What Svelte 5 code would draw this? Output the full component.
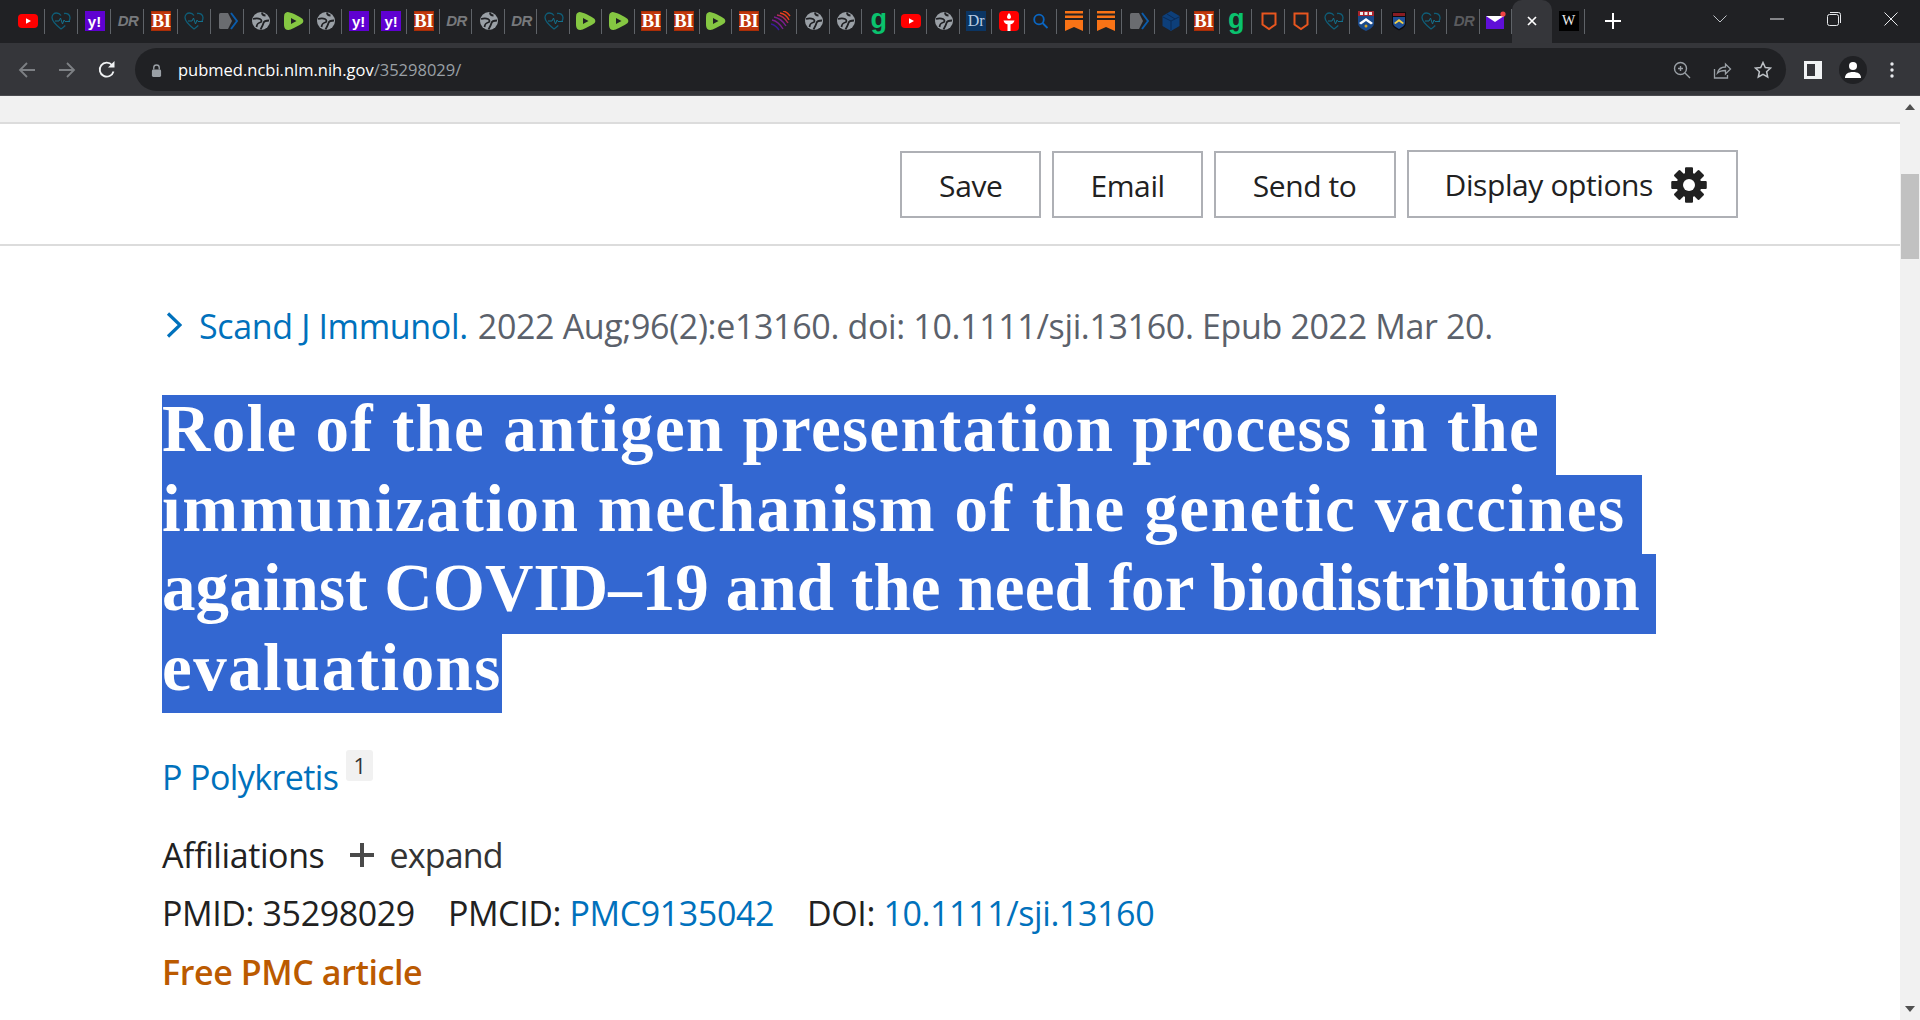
<script>
  const tabs = ['yt','heart','yahoo','dr','bi','heart','pocket','globe','rumble','globe','yahoo','yahoo','bi','dr','globe','dr','heart','rumble','rumble','bi','bi','rumble','bi','spiral','globe','globe','g','yt','globe','drb','torch','search','ribbon','ribbon','pocket','hex','bi','g','shield','shield','heart','crest','crestdark','heart','drdark','mail'];
  const gearTeeth = [0, 45, 90, 135, 180, 225, 270, 315];
</script>

{#snippet favicon(kind)}
  {#if kind === 'yt'}
    <svg viewBox="0 0 20 20" class="fav"><rect x="0" y="3" width="20" height="14" rx="4" fill="#f00"/><path d="M8 7.2v5.6l5-2.8z" fill="#fff"/></svg>
  {:else if kind === 'heart'}
    <svg viewBox="0 0 20 20" class="fav"><path d="M10 18C5 14 1 10.500 1 6.500 1 3.500 3.200 2 5.500 2 7.500 2 9 3 10 4.500M13 2.500c3-.8 6 1 6 4.300 0 1.200-.4 2.300-1 3.400M10 18c1.500-1 3-2.300 4.300-3.500" fill="none" stroke="#0f5e78" stroke-width="1.300"/><path d="M4 10h4l1.500-3 2 6 1.500-4 1 1.500h5" fill="none" stroke="#14708c" stroke-width="1"/></svg>
  {:else if kind === 'yahoo'}
    <div class="fav square yahoo">y!</div>
  {:else if kind === 'dr'}
    <div class="fav drtext">DR</div>
  {:else if kind === 'drdark'}
    <div class="fav drtext darker">DR</div>
  {:else if kind === 'bi'}
    <div class="fav square bi">BI</div>
  {:else if kind === 'pocket'}
    <svg viewBox="0 0 20 20" class="fav"><path d="M1 3.500Q1 2 2.500 2H10l4 8-4 8H2.500Q1 18 1 16.500z" fill="#6a6c70"/><path d="M13 2l6 8-6 8" fill="none" stroke="#0b5cab" stroke-width="2"/></svg>
  {:else if kind === 'globe'}
    <svg viewBox="0 0 20 20" class="fav"><circle cx="10" cy="10" r="9" fill="#9aa0a6"/><path d="M2 8c3-1 5-1 7 0s2 3 0 3.500-3 1-3.500 4.500" fill="none" stroke="#202124" stroke-width="1.800"/><path d="M18 9.500c-3 0-5 .5-5.500 2.500s-1 3-3 6.500M11 1.500c0 2 1.500 3 3.500 3" fill="none" stroke="#202124" stroke-width="1.800"/></svg>
  {:else if kind === 'rumble'}
    <svg viewBox="0 0 20 20" class="fav"><path d="M3.500 1c-2 .3-3.300 1.500-3.400 4-.2 3.300-.2 6.700 0 10 .1 2.500 2 4.200 4.500 4 2-.2 8-3.200 13-6.300 2.300-1.500 2.300-4 0-5.500C13 4 7 1.500 3.500 1z" fill="#85c742"/><path d="M7 7v6l5.500-3z" fill="#202124"/></svg>
  {:else if kind === 'spiral'}
    <svg viewBox="0 0 20 20" class="fav" fill="none" stroke-width="1.400"><path d="M12 0c3 .5 5 2 7 5M9 2c4 .5 7 3 9 7" stroke="#e8401a"/><path d="M6 4c5 .5 8 3 11 8" stroke="#b02a5a"/><path d="M3 6c5 1 9 4 12 9M1 9c5 1 8 4 11 9" stroke="#7a1d8f"/><path d="M0 13c4 1 6 3 8 6" stroke="#3a1a9a"/></svg>
  {:else if kind === 'g'}
    <div class="fav gmark">g</div>
  {:else if kind === 'drb'}
    <div class="fav square drb">Dr</div>
  {:else if kind === 'torch'}
    <svg viewBox="0 0 20 20" class="fav"><rect width="20" height="20" rx="4" fill="#f00"/><path d="M10 2c1.500 2 2 3 2 4s-1 2-2 2-2-1-2-2 .5-2 2-4z" fill="#fff"/><path d="M4.500 9.500h11c-.5 2.300-2.300 3.500-4 3.800V20h-3v-6.700c-1.700-.3-3.500-1.500-4-3.800z" fill="#fff"/></svg>
  {:else if kind === 'search'}
    <svg viewBox="0 0 20 20" class="fav" fill="none" stroke="#0a66c2" stroke-width="1.800"><circle cx="8" cy="8.500" r="4.800"/><path d="M11.500 12l5 5"/></svg>
  {:else if kind === 'ribbon'}
    <svg viewBox="0 0 20 20" class="fav" fill="#f97316"><rect x="1" y="0" width="18" height="2.500"/><rect x="1" y="4.500" width="18" height="2.500"/><path d="M1 9h18v11l-9-4-9 4z"/></svg>
  {:else if kind === 'hex'}
    <svg viewBox="0 0 20 20" class="fav"><path d="M10 0l8.500 5v10L10 20l-8.500-5V5z" fill="#0d3f7a"/><path d="M2 6l8 4 8-4M10 10v9M6 3l8 5" fill="none" stroke="#0a2a55" stroke-width="1"/></svg>
  {:else if kind === 'shield'}
    <svg viewBox="0 0 20 20" class="fav"><path d="M3.500 2.500h13v11L10 18l-6.500-4.500z" fill="none" stroke="#e8561f" stroke-width="2"/></svg>
  {:else if kind === 'crest'}
    <svg viewBox="0 0 20 20" class="fav"><path d="M2 0h16v12c0 4-4 6-8 8-4-2-8-4-8-8z" fill="#1b4a8a"/><rect x="2" y="0" width="16" height="5" fill="#a8242c"/><path d="M4 1h3v3H4zM8.500 1h3v3h-3zM13 1h3v3h-3z" fill="#eee"/><path d="M3 12l7-5 7 5-2 1.500-5-3.500-5 3.500z" fill="#fff"/><circle cx="10" cy="15" r="1.500" fill="#d9a520"/></svg>
  {:else if kind === 'crestdark'}
    <svg viewBox="0 0 20 20" class="fav"><path d="M3 1h14v11c0 3.500-3 5.500-7 7.500C6 17.500 3 15.500 3 12z" fill="#0c0c10"/><rect x="4" y="2" width="12" height="3" fill="#8a1c22"/><path d="M4 6h12v6c0 2.500-2.500 4-6 6-3.500-2-6-3.500-6-6z" fill="#1f4f96"/><path d="M5 12l5-4 5 4-1.500 1L10 10.500 6.500 13z" fill="#f2d24a"/></svg>
  {:else if kind === 'mail'}
    <svg viewBox="0 0 20 20" class="fav"><rect x="0" y="5" width="18" height="13" fill="#5f0fd8"/><path d="M0 5h18l-9 6z" fill="#fff"/><circle cx="17" cy="3" r="2.600" fill="#ef4444"/></svg>
  {/if}
{/snippet}

<div class="window">
  <header class="tabstrip">
    {#each tabs as kind}
      <div class="tab">{@render favicon(kind)}</div>
    {/each}
    <div class="tab active">
      <svg viewBox="0 0 12 12" width="12" height="12" fill="none" stroke="#fff" stroke-width="1.700"><path d="M2 2l8 8M10 2l-8 8"/></svg>
    </div>
    <div class="tab"><div class="fav square wiki">W</div></div>
    <svg class="plus" viewBox="0 0 16 16" width="16" height="16" stroke="#fff" stroke-width="2"><path d="M8 0v16M0 8h16"/></svg>
    <div class="wincontrols">
      <svg class="chev" viewBox="0 0 14 8" width="14" height="8" fill="none" stroke="#bdc1c6"><path d="M.5.500L7 7 13.500.500"/></svg>
      <svg class="min" viewBox="0 0 14 2" width="14" height="2" stroke="#e8eaed"><path d="M0 1h14"/></svg>
      <svg class="restore" viewBox="0 0 14 14" width="14" height="14" fill="none" stroke="#e8eaed"><rect x=".5" y="2.500" width="11" height="11" rx="2"/><path d="M3 .5h8.500a2 2 0 0 1 2 2V11"/></svg>
      <svg class="close" viewBox="0 0 14 14" width="14" height="14" fill="none" stroke="#e8eaed"><path d="M.5.500l13 13M13.500.500l-13 13"/></svg>
    </div>
  </header>

  <div class="toolbar">
    <svg class="nav" viewBox="0 0 18 18" width="18" height="18" fill="none" stroke="#7d8084" stroke-width="1.800"><path d="M17 9H2M9 2L2 9l7 7"/></svg>
    <svg class="nav" viewBox="0 0 18 18" width="18" height="18" fill="none" stroke="#7d8084" stroke-width="1.800"><path d="M1 9h15M9 2l7 7-7 7"/></svg>
    <svg class="nav" viewBox="0 0 18 18" width="18" height="18" fill="none" stroke="#f1f3f4" stroke-width="1.800"><path d="M15.500 10.500A7 7 0 1 1 14 4"/><path d="M10 6.500h6.500V0z" fill="#f1f3f4" stroke="none"/></svg>
    <div class="omnibox">
      <svg class="lock" viewBox="0 0 12 14" width="11" height="13"><path d="M3 6V4a3 3 0 0 1 6 0v2" fill="none" stroke="#9aa0a6" stroke-width="1.500"/><rect x="1" y="6" width="10" height="8" rx="1.500" fill="#9aa0a6"/></svg>
      <span class="url">pubmed.ncbi.nlm.nih.gov<span class="urlpath">/35298029/</span></span>
      <div class="omni-icons">
        <svg viewBox="0 0 18 18" width="18" height="18" fill="none" stroke="#9aa0a6" stroke-width="1.400"><circle cx="7.500" cy="7.500" r="6"/><path d="M12 12l5 5M5 7.500h5M7.500 5v5"/></svg>
        <svg viewBox="0 0 18 18" width="19" height="18" fill="none" stroke="#9aa0a6" stroke-width="1.300"><path d="M1 8v9h13v-3"/><path d="M4 12c1-4 4-6 8-6V3l5 5-5 5V9.500c-3 0-6 .5-8 2.500z"/></svg>
        <svg viewBox="0 0 18 18" width="18" height="18" fill="none" stroke="#bdc1c6" stroke-width="1.500"><path d="M9 1.500l2.300 5 5.200.6-3.900 3.600 1.100 5.300L9 13.300 4.300 16l1.100-5.300L1.500 7.100l5.200-.6z"/></svg>
      </div>
    </div>
    <div class="tool-icons">
      <svg viewBox="0 0 18 18" width="18" height="18"><rect width="18" height="18" fill="#f1f3f4"/><rect x="3" y="3" width="8" height="12" fill="#35363a"/></svg>
      <div class="avatar">
        <svg viewBox="0 0 18 18" width="18" height="18" fill="#fff"><circle cx="9" cy="5" r="4"/><path d="M1 17c0-4 3-6 8-6s8 2 8 6z"/></svg>
      </div>
      <svg viewBox="0 0 4 16" width="4" height="16" fill="#e8eaed"><circle cx="2" cy="2" r="1.700"/><circle cx="2" cy="8" r="1.700"/><circle cx="2" cy="14" r="1.700"/></svg>
    </div>
  </div>

  <div class="page">
    <main class="main">
      <div class="topband"></div>
      <div class="actions">
        <button class="btn">Save</button>
        <button class="btn">Email</button>
        <button class="btn">Send to</button>
        <button class="btn display">
          Display options
          <svg viewBox="0 0 36 36" width="36" height="36" fill="#212121">
            {#each gearTeeth as angle}
              <rect x="14" y="0.500" width="8" height="35" rx="1" transform="rotate({angle} 18 18)"/>
            {/each}
            <circle cx="18" cy="18" r="12.500"/>
            <circle cx="18" cy="18" r="6" fill="#fff"/>
          </svg>
        </button>
      </div>

      <article class="article">
        <div class="citation">
          <svg class="chevron" viewBox="0 0 16 26" width="16" height="26" fill="none" stroke="#0071bc" stroke-width="3.200"><path d="M2 1.500L14 13 2 24.500"/></svg>
          <a class="link">Scand J Immunol.</a>
          <span>2022 Aug;96(2):e13160. doi: 10.1111/sji.13160. Epub 2022 Mar 20.</span>
        </div>

        <h1 class="title">
          <span class="band l1">Role of the antigen presentation process in the</span>
          <span class="band l2">immunization mechanism of the genetic vaccines</span>
          <span class="band l3">against COVID–19 and the need for biodistribution</span>
          <span class="band l4">evaluations</span>
        </h1>

        <div class="authors">
          <a class="link">P Polykretis</a>
          <sup class="affnum">1</sup>
        </div>

        <div class="affiliations">
          <span>Affiliations</span>
          <svg viewBox="0 0 26 26" width="26" height="26" stroke="#4a4a4a" stroke-width="4"><path d="M13 1v24M1 13h24"/></svg>
          <span class="expand">expand</span>
        </div>

        <div class="ids">
          <span>PMID: 35298029</span>
          <span>PMCID: <a class="link">PMC9135042</a></span>
          <span>DOI: <a class="link">10.1111/sji.13160</a></span>
        </div>

        <div class="free">Free PMC article</div>
      </article>
    </main>

    <aside class="scrollbar">
      <svg viewBox="0 0 10 6" width="10" height="6" fill="#505050"><path d="M5 0l5 6H0z"/></svg>
      <div class="thumb"></div>
      <svg class="down" viewBox="0 0 10 6" width="10" height="6" fill="#505050"><path d="M5 6L0 0h10z"/></svg>
    </aside>
  </div>
</div>

<style>
  :global(body) {
    margin: 0;
    background: #fff;
  }

  .window {
    height: 100vh;
    display: flex;
    flex-direction: column;
    overflow: hidden;
    font-family: "Open Sans", "Noto Sans", sans-serif;
  }

  /* browser chrome */
  .tabstrip {
    height: 43px;
    flex: none;
    background: #202124;
    display: flex;
    align-items: flex-start;
    padding-left: 11.4px;
    box-sizing: border-box;
  }

  .tab {
    width: 32.5px;
    height: 43px;
    flex: none;
    box-sizing: border-box;
    display: flex;
    justify-content: center;
    padding-top: 11px;
    position: relative;
  }

  .tab:nth-child(-n+8) {
    width: 33.25px;
  }

  .tab::after {
    content: "";
    position: absolute;
    right: 0;
    top: 9px;
    height: 25px;
    width: 1px;
    background: #5f6368;
  }

  .tab.active {
    width: 40px;
    background: #35363a;
    border-radius: 10px 10px 0 0;
    padding-top: 15px;
  }

  .tab.active::after {
    display: none;
  }

  .fav {
    width: 20px;
    height: 20px;
    display: block;
    flex: none;
  }

  .square {
    display: flex;
    align-items: center;
    justify-content: center;
    overflow: hidden;
  }

  .yahoo {
    background: #5f01d1;
    color: #fff;
    font: bold 15px "Liberation Sans", sans-serif;
  }

  .bi {
    background: #c0360c;
    color: #fff;
    font: bold 19px/20px "Liberation Serif", serif;
    letter-spacing: -.5px;
    box-shadow: inset 0 0 0 1px #a92e08;
  }

  .drb {
    background: #0b3563;
    color: #b9cce4;
    font: 16px/20px "Liberation Serif", serif;
  }

  .wiki {
    background: #000;
    color: #eee;
    font: 14px/20px "Liberation Serif", serif;
  }

  .drtext {
    color: #77797c;
    font: italic bold 15px/20px "Liberation Sans", sans-serif;
    text-align: center;
    letter-spacing: -.5px;
  }

  .drtext.darker {
    color: #5a5b5e;
  }

  .gmark {
    color: #0ac26e;
    font: bold 27px/17px "Liberation Sans", sans-serif;
    text-align: center;
  }

  .plus {
    margin: 13px 0 0 20px;
    flex: none;
  }

  .wincontrols {
    margin-left: auto;
    display: flex;
    align-items: center;
    height: 37px;
    color: #e8eaed;
  }

  .wincontrols svg {
    flex: none;
    margin-right: 43px;
  }

  .wincontrols .close {
    margin-right: 22px;
  }

  .toolbar {
    height: 53px;
    flex: none;
    background: #35363a;
    border-bottom: 1px solid #4a4b4f;
    box-sizing: border-box;
    padding: 5px 26px 4px 18px;
    display: flex;
    align-items: center;
  }

  .nav {
    flex: none;
    margin-right: 22px;
  }

  .omnibox {
    flex: 1;
    margin-left: -3px;
    height: 43px;
    border-radius: 22px;
    background: #202124;
    display: flex;
    align-items: center;
    padding: 0 14px 0 16px;
  }

  .lock {
    flex: none;
    margin: 0 16px 0 0;
    position: relative;
    top: 1px;
  }

  .url {
    color: #fff;
    font-size: 16.5px;
  }

  .urlpath {
    color: #9aa0a6;
  }

  .omni-icons {
    margin-left: auto;
    display: flex;
    gap: 22px;
    align-items: center;
  }

  .tool-icons {
    display: flex;
    align-items: center;
    flex: none;
    margin-left: 18px;
    gap: 13px;
  }

  .avatar {
    width: 28px;
    height: 28px;
    margin-left: 4px;
    border-radius: 50%;
    background: #202124;
    display: flex;
    align-items: center;
    justify-content: center;
  }

  .tool-icons > svg:last-child {
    margin-left: 10px;
  }

  /* page */
  .page {
    flex: 1;
    min-height: 0;
    display: flex;
  }

  .main {
    flex: 1;
    min-width: 0;
  }

  .topband {
    height: 26px;
    background: #f1f1f1;
    border-bottom: 2px solid #dcdcdc;
  }

  .actions {
    height: 122px;
    box-sizing: border-box;
    border-bottom: 2px solid #dcdcdc;
    display: flex;
    justify-content: flex-end;
    align-items: flex-start;
    gap: 11px;
    padding: 27px 162px 0 0;
  }

  .btn {
    height: 67px;
    padding: 1px 37px 0;
    background: #fff;
    border: 2px solid #aeb0b5;
    color: #212121;
    font: 30px "Open Sans", sans-serif;
    letter-spacing: -.4px;
    display: flex;
    align-items: center;
    gap: 18px;
  }

  .btn:nth-child(2) {
    padding: 1px 36px 0;
  }

  .btn.display {
    height: 68px;
    margin-top: -1px;
    padding: 1px 29px 0 36px;
  }

  .article {
    padding: 0 0 0 162px;
    color: #212121;
    font-size: 34px;
    letter-spacing: -.4px;
  }

  .link {
    color: #0071bc;
  }

  .citation {
    margin-top: 57px;
    height: 46px;
    display: flex;
    align-items: center;
    gap: 10px;
    color: #5b616b;
    white-space: nowrap;
    letter-spacing: -.35px;
  }

  .chevron {
    margin: 0 7px 3px 4px;
    flex: none;
  }

  .title {
    margin: 46px 0 0;
    font: bold 67px/67px "Liberation Serif", serif;
    color: #fff;
  }

  .band {
    display: block;
    width: fit-content;
    height: 79.600px;
    background: #3367d1;
    white-space: nowrap;
    padding-right: 16px;
  }

  .l1 { letter-spacing: 1.300px; }
  .l2 { letter-spacing: 1.600px; }
  .l3 { letter-spacing: .1px; }
  .l4 { letter-spacing: 1.450px; padding-right: 0; }

  .authors {
    margin-top: 40px;
    height: 48px;
    display: flex;
    align-items: center;
    gap: 8px;
    letter-spacing: -.6px;
  }

  .affnum {
    width: 27px;
    height: 31px;
    text-align: center;
    font-size: 22px;
    line-height: 31px;
    background: #f1f1f1;
    border-radius: 3px;
    margin-top: -23px;
    letter-spacing: 0;
    color: #333;
  }

  .affiliations {
    margin-top: 30px;
    height: 48px;
    display: flex;
    align-items: center;
    gap: 25px;
  }

  .affiliations .expand {
    margin-left: -11px;
    color: #333;
    letter-spacing: -.8px;
  }

  .ids {
    height: 48px;
    margin-top: 10px;
    display: flex;
    align-items: center;
    gap: 33px;
  }

  .free {
    margin-top: 11px;
    height: 48px;
    line-height: 48px;
    color: #bb5a00;
    font-weight: 600;
  }

  .scrollbar {
    width: 20px;
    flex: none;
    background: #f1f1f1;
    display: flex;
    flex-direction: column;
    align-items: center;
    padding: 8px 0;
    box-sizing: border-box;
  }

  .thumb {
    width: 18px;
    height: 85px;
    background: #c1c1c1;
    margin-top: 64px;
  }

  .down {
    margin-top: auto;
  }
</style>
